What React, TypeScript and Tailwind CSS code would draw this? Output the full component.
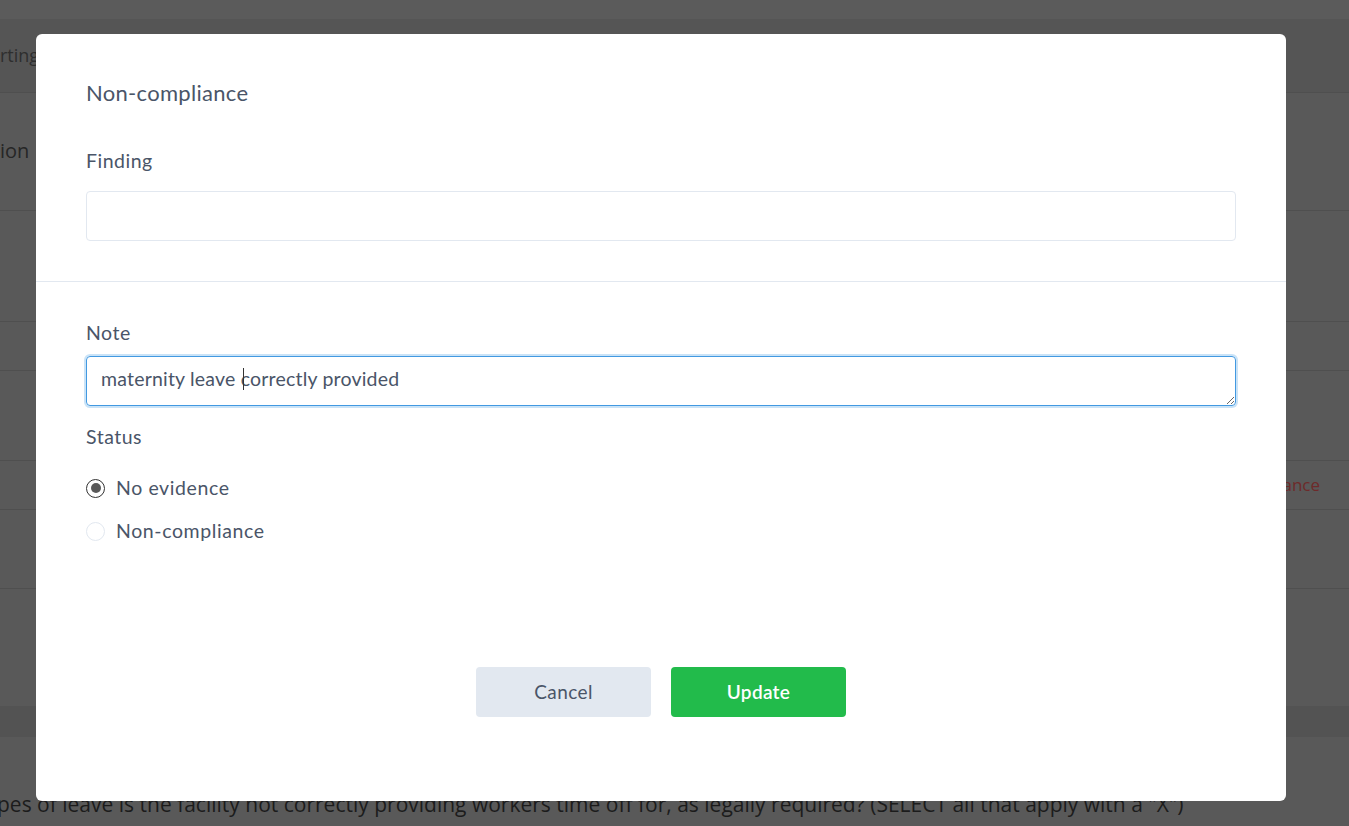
import React from "react";

export default function App() {
  return (
    <div className="relative h-[826px] w-[1349px] overflow-hidden bg-[#595959] font-['Open_Sans',sans-serif]">
      {/* background page (dimmed) */}
      <div className="h-[19px] bg-[#5b5b5b]" />
      <div className="flex h-[74px] items-center border-b border-[#4f4f4f] bg-[#555555]">
        <span className="text-[18px] text-[#2e2e2e]">rting</span>
      </div>
      <div className="flex h-[118px] items-center border-b border-[#4f4f4f] pb-[2px]">
        <span className="text-[20px] text-[#262626]">ion</span>
      </div>
      <div className="h-[111px] border-b border-[#4f4f4f]" />
      <div className="h-[49px] border-b border-[#4f4f4f]" />
      <div className="h-[90px] border-b border-[#4f4f4f]" />
      <div className="flex h-[49px] items-center justify-end border-b border-[#4f4f4f] pr-[29px]">
        <span className="text-[17px] text-[#6e2a2a]">Non-compliance</span>
      </div>
      <div className="h-[79px] border-b border-[#4f4f4f]" />
      <div className="h-[117px]" />
      <div className="h-[31px] bg-[#535353]" />
      <div className="pt-[55px]">
        <p className="-ml-[3px] whitespace-nowrap text-[21px] leading-6 text-[#1c1c1c]">
          pes of leave is the facility not correctly providing workers time off for, as legally required? (SELECT all that apply with a "X")
        </p>
      </div>

      {/* modal */}
      <div className="absolute inset-0 pl-[36px] pt-[34px]">
        <div className="flex h-[767px] w-[1250px] flex-col rounded-md bg-white font-['Lato',sans-serif] text-[#4a5568]">
          <div className="border-b border-[#e2e8f0] px-[50px] pb-[40px] pt-[47px]">
            <h2 className="text-[22px] leading-6 tracking-[0.3px]">Non-compliance</h2>
            <label className="mt-[44px] block text-[19.5px] leading-6 tracking-[0.5px]">Finding</label>
            <input
              readOnly
              className="mt-[18px] block h-[50px] w-full rounded border border-[#e2e8f0] px-[14px] text-[18px] outline-none"
              value=""
            />
          </div>
          <div className="px-[50px] pt-[39px]">
            <label className="block text-[19.5px] leading-6 tracking-[0.5px]">Note</label>
            <div className="relative mt-[11px]">
              <textarea
                readOnly
                className="block h-[50px] w-full resize-y rounded border border-[#4299e1] px-[14px] py-[10px] text-[19.5px] leading-6 tracking-[0.2px] text-[#4a5568] shadow-[0_0_0_2px_rgba(66,153,225,0.28)] outline-none"
                value="maternity leave correctly provided"
              />
              <span className="absolute left-[157px] top-[12px] h-[22px] w-px bg-[#333]" />
            </div>
            <div className="mt-[19px] text-[19.5px] leading-6 tracking-[0.5px]">Status</div>
            <div className="mt-[27px] flex items-center gap-[11px] text-[19.5px] leading-6 tracking-[0.6px]">
              <span className="flex h-[19px] w-[19px] items-center justify-center rounded-full border-[1.5px] border-[#333]">
                <span className="h-[10px] w-[10px] rounded-full bg-[#595959]" />
              </span>
              <span>No evidence</span>
            </div>
            <div className="mt-[19px] flex items-center gap-[11px] text-[19.5px] leading-6 tracking-[0.6px]">
              <span className="h-[19px] w-[19px] rounded-full border border-[#e2e8f0]" />
              <span>Non-compliance</span>
            </div>
          </div>
          <div className="mt-[124px] flex justify-center gap-[20px]">
            <button className="h-[50px] w-[175px] rounded bg-[#e2e8f0] text-[19px] tracking-[0.4px] text-[#4a5568]">Cancel</button>
            <button className="h-[50px] w-[175px] rounded bg-[#22bb4b] text-[19px] font-semibold tracking-[0.3px] text-white">Update</button>
          </div>
        </div>
      </div>
    </div>
  );
}
